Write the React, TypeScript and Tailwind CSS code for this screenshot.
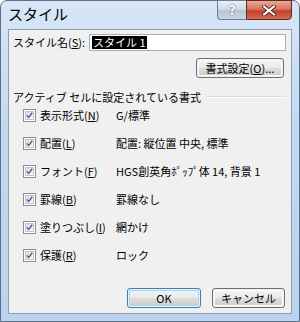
import React from 'react';

const FONT = { fontFamily: '"Noto Sans CJK JP", "Noto Sans", sans-serif' };

const ROWS = [
  { label: '表示形式', key: 'N', value: 'G/標準' },
  { label: '配置', key: 'L', value: '配置: 縦位置 中央, 標準' },
  { label: 'フォント', key: 'F', value: 'HGS創英角ﾎﾟｯﾌﾟ体 14, 背景 1' },
  { label: '罫線', key: 'B', value: '罫線なし' },
  { label: '塗りつぶし', key: 'I', value: '網かけ' },
  { label: '保護', key: 'R', value: 'ロック' },
];

function CheckBox() {
  return (
    <div className="w-[13px] h-[13px] border border-[#8e8f8f] bg-white p-[1px] shrink-0">
      <div className="w-full h-full bg-gradient-to-br from-[#dcdcdc] to-[#fbfbfb] border border-[#c6c6c6] flex items-center justify-center">
        <svg width="9" height="9" viewBox="0 0 9 9">
          <path d="M1 4.5 L3.5 7 L8 1" fill="none" stroke="#4a5f97" strokeWidth="1.8" />
        </svg>
      </div>
    </div>
  );
}

function Btn({ children, def, w }: { children: React.ReactNode; def?: boolean; w: string }) {
  return (
    <div
      className={`${w} h-[20px] rounded-[3px] border ${def ? 'border-[#3c7fb1]' : 'border-[#707070]'} p-[1px]`}
    >
      <div
        className={`h-full rounded-[2px] border ${def ? 'border-[#9fd9f5]' : 'border-[#fcfcfc]'} bg-[linear-gradient(to_bottom,#f2f2f2_0%,#ebebeb_50%,#dddddd_51%,#cfcfcf_100%)] flex items-center justify-center text-[11px] leading-none text-black whitespace-nowrap`}
      >
        {children}
      </div>
    </div>
  );
}

export default function App() {
  return (
    <div className="w-[300px] h-[322px] bg-white" style={FONT}>
      <div className="relative w-[300px] h-[322px] rounded-t-[7px] border border-[#5a6f88] bg-[linear-gradient(to_bottom,#d8e6f6_0%,#c3d8f0_40%,#bcd3ee_100%)] flex flex-col">
        {/* title bar */}
        <div className="h-[28px] flex items-start relative">
          <span className="ml-[7px] mt-[4px] text-[15px] leading-[18px] text-black">スタイル</span>
          <div className="absolute top-[-1px] right-[7px] flex">
            <div className="w-[29px] h-[20px] rounded-bl-[4px] border border-[#6e7f94] border-r-0 bg-[linear-gradient(to_bottom,#e6eef7_0%,#cfdae6_50%,#b5c4d6_51%,#c9d6e4_100%)] flex items-center justify-center text-[13px] font-bold text-white [text-shadow:0_0_2px_#33475f]">
              ?
            </div>
            <div className="w-[46px] h-[20px] rounded-br-[4px] border border-[#5a2a25] bg-[linear-gradient(to_bottom,#e9a99b_0%,#d9755f_45%,#c2402b_55%,#d66c51_100%)] flex items-center justify-center">
              <svg width="14" height="11" viewBox="0 0 14 11">
                <path d="M2 1.5 L12 9.5 M12 1.5 L2 9.5" stroke="#3b1c18" strokeWidth="3.6" strokeLinecap="square" />
                <path d="M2 1.5 L12 9.5 M12 1.5 L2 9.5" stroke="#ffffff" strokeWidth="2" strokeLinecap="square" />
              </svg>
            </div>
          </div>
        </div>

        {/* client */}
        <div className="ml-[7px] mr-[7px] h-[285px] border border-[#8d9db1] bg-[#f0f0f0] flex flex-col px-[4px] pt-[4px] text-[11px] text-black">
          <div className="flex items-center h-[17px]">
            <span className="w-[76px] leading-none whitespace-nowrap">
              スタイル名(<span className="underline">S</span>):
            </span>
            <div className="flex-1 h-[17px] mr-[1px] border border-[#abadb3] bg-white flex items-center px-[2px]">
              <span className="bg-black text-white leading-[13px] px-[1px] whitespace-nowrap">スタイル 1</span>
            </div>
          </div>

          <div className="flex justify-end mt-[7px] mr-[3px]">
            <Btn w="w-[88px]">
              書式設定(<span className="underline">O</span>)...
            </Btn>
          </div>

          <div className="flex items-center h-[14px] mt-[12px]">
            <span className="leading-none whitespace-nowrap">アクティブ セルに設定されている書式</span>
            <div className="flex-1 ml-[6px] mr-[1px] border-t border-[#d5dfe5] border-b border-b-white" />
          </div>

          <div className="flex flex-col gap-[8px] mt-[1px]">
            {ROWS.map((r) => (
              <div key={r.key} className="h-[20px] flex items-center">
                <div className="ml-[10px]">
                  <CheckBox />
                </div>
                <span className="ml-[4px] w-[76px] leading-none whitespace-nowrap">
                  {r.label}(<span className="underline">{r.key}</span>)
                </span>
                <span className="leading-none whitespace-nowrap">{r.value}</span>
              </div>
            ))}
          </div>

          <div className="flex justify-end gap-[11px] mt-[23px] mr-[2px]">
            <Btn w="w-[74px]" def>
              OK
            </Btn>
            <Btn w="w-[73px]">キャンセル</Btn>
          </div>
        </div>
      </div>
    </div>
  );
}
